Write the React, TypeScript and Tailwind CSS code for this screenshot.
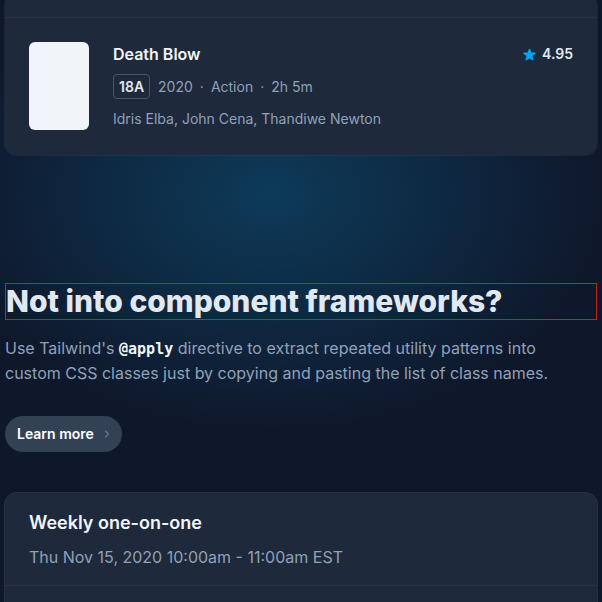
import React from "react";

function Star() {
  return (
    <svg viewBox="0 0 20 20" className="w-[15px] h-[15px] text-sky-500" fill="currentColor">
      <path d="M9.05 2.93c.3-.92 1.6-.92 1.9 0l1.47 4.53h4.76c.97 0 1.37 1.24.59 1.81l-3.85 2.8 1.47 4.53c.3.92-.76 1.69-1.54 1.12L10 14.92l-3.85 2.8c-.78.57-1.84-.2-1.54-1.12l1.47-4.53-3.85-2.8c-.78-.57-.38-1.81.59-1.81h4.76l1.47-4.53z" />
    </svg>
  );
}

export default function App() {
  return (
    <div
      className="w-[602px] h-[602px] overflow-hidden bg-[#0f172a] bg-[radial-gradient(ellipse_340px_240px_at_270px_195px,rgba(12,74,110,0.7),rgba(15,23,42,0)_100%)] text-slate-100 px-[5px]"
      style={{ fontFamily: "Inter, 'Noto Sans', sans-serif" }}
    >
      {/* movie card */}
      <div className="-mt-[7px] rounded-xl bg-[#1e293b] ring-1 ring-white/5">
        <div className="h-[25px] border-b border-[#293548]" />
        <div className="flex items-start pl-6 pr-6 py-6">
          <div className="w-[60px] h-[88px] rounded-md bg-[#f1f5f9] shrink-0" />
          <div className="ml-6 flex-1">
            <div className="flex items-center justify-between h-6">
              <div className="text-base font-semibold text-slate-100">Death Blow</div>
              <div className="flex items-center gap-[5px] text-sm font-semibold text-slate-200">
                <Star />
                <span>4.95</span>
              </div>
            </div>
            <div className="mt-2 flex items-center text-sm text-slate-400">
              <span className="h-[25px] flex items-center px-[5px] rounded border border-slate-600 font-semibold text-slate-200">18A</span>
              <span className="ml-2">2020</span>
              <span className="mx-[7px]">·</span>
              <span>Action</span>
              <span className="mx-[7px]">·</span>
              <span>2h 5m</span>
            </div>
            <div className="mt-2 text-sm text-slate-400 leading-6">Idris Elba, John Cena, Thandiwe Newton</div>
          </div>
        </div>
      </div>

      {/* CTA section */}
      <div className="mt-[128px] border border-[#c81e1e]">
        <h2 className="text-3xl leading-[35px] font-extrabold text-slate-200">Not into component frameworks?</h2>
      </div>
      <p className="mt-[16px] max-w-[565px] text-base leading-6 text-slate-400">
        Use Tailwind's{" "}
        <code className="font-bold text-slate-100" style={{ fontFamily: "'DejaVu Sans Mono', monospace", fontSize: "15px" }}>@apply</code>{" "}
        directive to extract repeated utility patterns into custom CSS classes just by copying and pasting the list of class names.
      </p>
      <div className="mt-[31px]">
        <button className="h-9 inline-flex items-center rounded-full bg-[#334155] pl-3 pr-3 text-sm font-semibold text-white">
          Learn more
          <svg viewBox="0 0 8 12" className="ml-[10px] w-[6px] h-[10px] text-slate-500" fill="none" stroke="currentColor" strokeWidth="1.8" strokeLinecap="round" strokeLinejoin="round">
            <path d="M2 2l4 4-4 4" />
          </svg>
        </button>
      </div>

      {/* event card */}
      <div className="mt-[41px] rounded-t-xl bg-[#1e293b] ring-1 ring-white/10">
        <div className="px-6 py-4 border-b border-[#293548]">
          <div className="text-lg leading-7 font-semibold text-slate-100">Weekly one-on-one</div>
          <div className="mt-2 text-base leading-6 text-slate-400">Thu Nov 15, 2020 10:00am - 11:00am EST</div>
        </div>
        <div className="h-10" />
      </div>
    </div>
  );
}
